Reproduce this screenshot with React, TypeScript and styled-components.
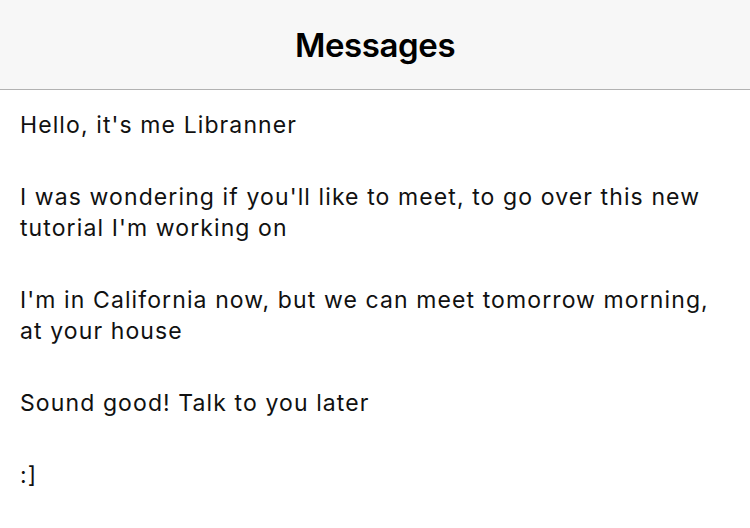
import styled, { createGlobalStyle } from 'styled-components';

const GlobalStyle = createGlobalStyle`
  html, body {
    margin: 0;
    padding: 0;
    background: #ffffff;
  }
  body {
    font-family: Inter, "Noto Sans", sans-serif;
    -webkit-font-smoothing: antialiased;
  }
`

const Screen = styled.div`
  display: flex;
  flex-direction: column;
  width: 750px;
  min-height: 528px;
  background: #ffffff;
`

const Header = styled.header`
  display: flex;
  align-items: center;
  justify-content: center;
  height: 89px;
  background: #f7f7f7;
  border-bottom: 1px solid #b2b2b2;
`

const Title = styled.h1`
  margin: 0;
  font-size: 33px;
  font-weight: 600;
  color: #000000;
  letter-spacing: -0.4px;
`

const List = styled.div`
  display: flex;
  flex-direction: column;
  gap: 41px;
  padding: 20px 20px 0 20px;
`

const Message = styled.p`
  margin: 0;
  font-size: 23px;
  line-height: 31px;
  letter-spacing: 1.1px;
  color: #111111;
`

const messages = [
  "Hello, it's me Libranner",
  "I was wondering if you'll like to meet, to go over this new tutorial I'm working on",
  "I'm in California now, but we can meet tomorrow morning, at your house",
  'Sound good! Talk to you later',
  ':]',
]

function App() {
  return (
    <Screen>
      <GlobalStyle />
      <Header>
        <Title>Messages</Title>
      </Header>
      <List>
        {messages.map((m, i) => (
          <Message key={i}>{m}</Message>
        ))}
      </List>
    </Screen>
  )
}

export default App
